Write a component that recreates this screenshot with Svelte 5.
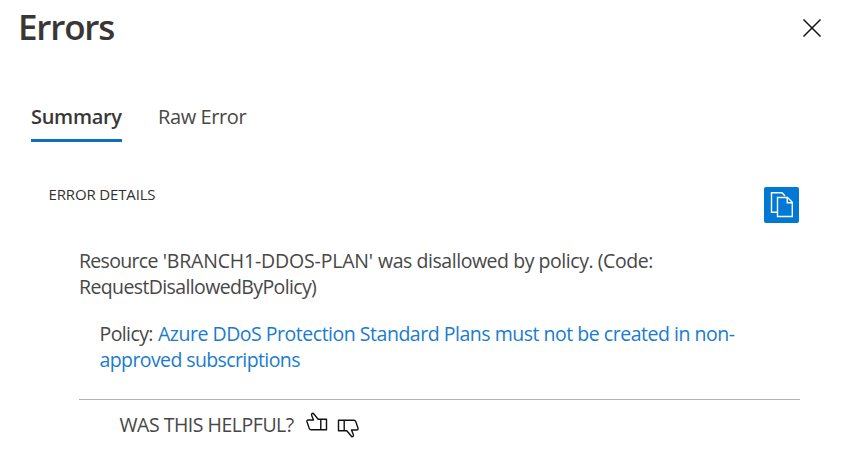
<script>
  let tab = $state('summary');
</script>

<main class="panel">
  <header>
    <h1>Errors</h1>
    <button class="close" aria-label="Close">
      <svg width="20" height="20" viewBox="0 0 20 20"><path d="M1.5 1.5 18.5 18.5M18.5 1.5 1.5 18.5" fill="none" stroke="#111" stroke-width="1.5" /></svg>
    </button>
  </header>

  <nav>
    <button class="tab" class:active={tab === 'summary'} onclick={() => (tab = 'summary')}><span class="t-sum">Summary</span></button>
    <button class="tab" class:active={tab === 'raw'} onclick={() => (tab = 'raw')}><span class="t-raw">Raw Error</span></button>
  </nav>

  <section class="details">
    <h2>ERROR DETAILS</h2>
    <button class="copy" aria-label="Copy">
      <svg width="35" height="36" viewBox="0 0 35 36" fill="none" stroke="#fff" stroke-width="1.4">
        <path d="M13.5 25.2H7.5V5.8H18L21 9" />
        <path d="M13.5 10.5H23.5L28.3 15.3V29.5H13.5Z" fill="#0078d4" />
        <path d="M23.2 10.5V15.7H28.3" />
      </svg>
    </button>
  </section>

  <section class="body">
    <p class="message"><span class="lead">Resource</span>{' '}<span class="name">'BRANCH1-DDOS-PLAN'</span>{' '}<span class="m1">was disallowed by policy. (Code:</span><br /><span class="m2">RequestDisallowedByPolicy)</span></p>
    <p class="policy"><span class="p0">Policy:</span>{' '}<a href="#policy"><span class="p1">Azure DDoS Protection Standard Plans must not be created in non-</span><br /><span class="p2">approved subscriptions</span></a></p>
    <footer>
      <span class="help">WAS THIS HELPFUL?</span>
      <button aria-label="Yes">
        <svg width="22" height="20" viewBox="0 0 22 20"><path d="M14.8 7.2H20.5V17.8H14.8ZM14.8 7.2H12.2L7.2 1.2C5.8 1.2 5.2 2.4 5.7 3.5L7.5 8H2.2C1 8 .7 8.8 1 9.8L3.2 16.4C3.5 17.4 4.2 17.8 5.2 17.8H14.8" fill="none" stroke="#111" stroke-width="1.4" stroke-linejoin="round" /></svg>
      </button>
      <button class="down" aria-label="No">
        <svg width="22" height="20" viewBox="0 0 22 20"><path d="M14.8 7.2H20.5V17.8H14.8ZM14.8 7.2H12.2L7.2 1.2C5.8 1.2 5.2 2.4 5.7 3.5L7.5 8H2.2C1 8 .7 8.8 1 9.8L3.2 16.4C3.5 17.4 4.2 17.8 5.2 17.8H14.8" fill="none" stroke="#111" stroke-width="1.4" stroke-linejoin="round" /></svg>
      </button>
    </footer>
  </section>
</main>

<style>
  :global(body) { margin: 0; background: #fff; }
  .panel {
    box-sizing: border-box;
    width: 861px;
    height: 472px;
    overflow: hidden;
    color: #484746;
    font: 400 19.5px/26px "Segoe UI", "Open Sans", "Noto Sans", sans-serif;
    white-space: nowrap;
  }
  button { display: flex; padding: 0; border: 0; background: none; font: inherit; color: inherit; cursor: pointer; }
  svg { display: block; }
  h1, h2, p { margin: 0; }
  header { display: flex; justify-content: space-between; align-items: flex-start; height: 104px; padding: 0 39px 0 18px; }
  h1 { margin-top: 3px; font-size: 35px; line-height: 48px; font-weight: 600; color: #383736; letter-spacing: -1.2px; }
  .close { margin-top: 18px; }
  nav { display: flex; gap: 36px; height: 83px; padding-left: 31px; }
  .tab { box-sizing: border-box; height: 38px; border-bottom: 3px solid transparent; font-size: 20px; }
  .t-sum { letter-spacing: -.3px; }
  .t-raw { letter-spacing: -.4px; }
  .tab.active { width: 91px; border-color: #106ebe; font-weight: 600; color: #383736; }
  .details { display: flex; justify-content: space-between; align-items: flex-start; height: 61px; padding: 0 62px 0 48.5px; }
  h2 { margin-top: -3px; font-size: 15px; line-height: 20px; font-weight: 400; color: #323130; letter-spacing: -.15px; }
  .copy { border-radius: 2px; background: #0078d4; }
  .body { margin: 0 61px 0 79px; }
  .message { height: 73px; }
  .policy { height: 78px; padding-left: 20.5px; }
  .lead { letter-spacing: -.7px; }
  .name { letter-spacing: -.18px; }
  .m1 { letter-spacing: -.45px; }
  .m2 { letter-spacing: -.62px; }
  .p0 { letter-spacing: -.6px; }
  .p1 { letter-spacing: -.48px; }
  .p2 { letter-spacing: -.6px; }
  .help { width: 175px; letter-spacing: -.48px; }
  a { color: #1a7bcf; text-decoration: none; }
  footer { display: flex; align-items: flex-start; border-top: 1px solid #b3b3b3; padding: 12px 0 0 40.5px; }
  footer button { margin-left: 11px; }
  footer .down { margin-left: 9px; }
  .down svg { transform: rotate(180deg); margin-top: 6px; }
</style>
